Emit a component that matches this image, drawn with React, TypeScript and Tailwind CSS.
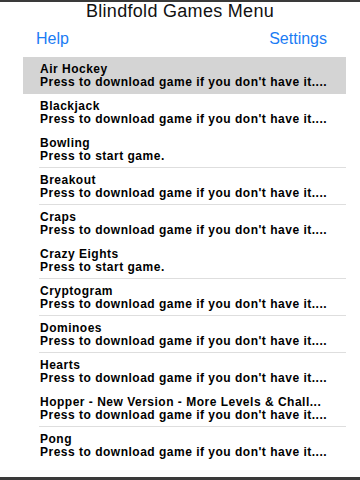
import React from "react";

type Game = { title: string; sub: string; sep: boolean; selected?: boolean };

const DL = "Press to download game if you don't have it....";
const ST = "Press to start game.";

const games: Game[] = [
  { title: "Air Hockey", sub: DL, sep: false, selected: true },
  { title: "Blackjack", sub: DL, sep: false },
  { title: "Bowling", sub: ST, sep: true },
  { title: "Breakout", sub: DL, sep: true },
  { title: "Craps", sub: DL, sep: false },
  { title: "Crazy Eights", sub: ST, sep: true },
  { title: "Cryptogram", sub: DL, sep: true },
  { title: "Dominoes", sub: DL, sep: true },
  { title: "Hearts", sub: DL, sep: false },
  { title: "Hopper - New Version - More Levels & Chall...", sub: DL, sep: true },
  { title: "Pong", sub: DL, sep: false },
];

export default function App() {
  return (
    <div
      className="w-[360px] h-[480px] flex flex-col bg-white overflow-hidden"
      style={{ fontFamily: '"Liberation Sans", Arial, sans-serif' }}
    >
      <div className="h-[2px] bg-[#3a3a3a] shrink-0" />
      <div className="h-[18px] text-center text-[18px] leading-[18px] tracking-[0.3px] text-[#111] shrink-0">
        Blindfold Games Menu
      </div>
      <div className="flex justify-between pl-[36px] pr-[33px] mt-[11px] h-[16px] text-[16px] leading-[16px] text-[#1b7cf4] shrink-0">
        <span>Help</span>
        <span>Settings</span>
      </div>
      <div className="ml-[23px] mr-[14px] mt-[10px] flex flex-col">
        {games.map((g) => (
          <div
            key={g.title}
            className={`h-[37px] flex flex-col ${g.selected ? "bg-[#d4d4d4]" : ""}`}
          >
            <div className="flex-1 pl-[17px] pt-[6px] font-bold text-[12px] leading-[13px] tracking-[0.5px] text-black whitespace-nowrap">
              <div>{g.title}</div>
              <div>{g.sub}</div>
            </div>
            <div className={`h-px ml-[16px] ${g.sep ? "bg-[#dedede]" : ""}`} />
          </div>
        ))}
      </div>
      <div className="flex-1" />
      <div className="h-[3px] bg-[#3a3a3a] shrink-0" />
    </div>
  );
}
